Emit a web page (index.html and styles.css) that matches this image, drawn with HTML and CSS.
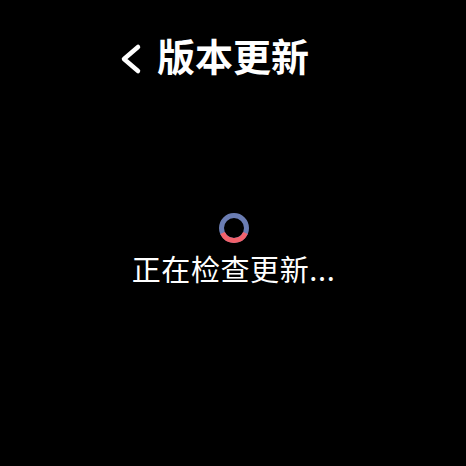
FILE: index.html
```html
<!DOCTYPE html>
<html lang="zh-CN">
<head>
<meta charset="utf-8">
<title>版本更新</title>
<link rel="stylesheet" href="styles.css">
</head>
<body>
<div class="screen">
  <header class="title-bar">
    <svg class="back-icon" width="22" height="32" viewBox="0 0 22 32" aria-hidden="true">
      <polyline points="18,4 4,16 18,28" fill="none" stroke="#fff" stroke-width="4.5" stroke-linecap="round" stroke-linejoin="round"/>
    </svg>
    <h1 class="title">版本更新</h1>
  </header>
  <main class="status">
    <svg class="spinner" width="30" height="30" viewBox="0 0 30 30" aria-hidden="true">
      <circle cx="15" cy="15" r="12.5" fill="none" stroke="#6b7db3" stroke-width="5"/>
      <path d="M26.42 20.08 A12.5 12.5 0 0 1 3.58 20.08" fill="none" stroke="#f2626c" stroke-width="5"/>
    </svg>
    <p class="status-text">正在检查更新...</p>
  </main>
</div>
</body>
</html>
```

FILE: styles.css
```css
html, body {
  margin: 0;
  padding: 0;
  background: #000;
}

.screen {
  width: 466px;
  height: 466px;
  background: #000;
  color: #fff;
  font-family: "Noto Sans CJK SC", "Noto Sans", sans-serif;
  overflow: hidden;
}

.title-bar {
  display: flex;
  align-items: center;
  height: 40px;
  margin-top: 35px;
  padding-left: 120px;
}

.back-icon {
  display: block;
  flex: none;
  margin-right: 15px;
  margin-top: 7px;
}

.title {
  margin: 0;
  font-size: 38px;
  font-weight: 700;
  line-height: 40px;
}

.status {
  display: flex;
  flex-direction: column;
  align-items: center;
  margin-top: 138px;
  padding-left: 1px;
}

.spinner {
  display: block;
}

.status-text {
  margin: 6px 0 0;
  font-size: 29px;
  font-weight: 400;
  line-height: 38px;
  letter-spacing: 0.6px;
}
```
